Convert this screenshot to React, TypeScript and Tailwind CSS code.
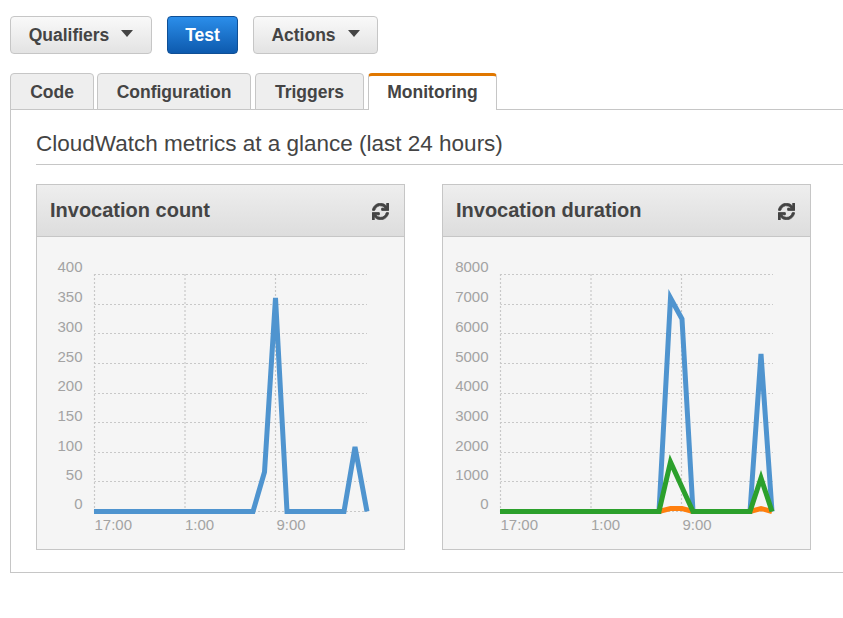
import { FaSync } from 'react-icons/fa'

const font = { fontFamily: '"Liberation Sans", Arial, sans-serif' }

const gridY = [274.5, 304.5, 333.5, 363.5, 393.5, 422.5, 452.5, 481.5, 511.5]
const labelY = [272, 302, 332, 362, 391, 421, 451, 480, 509]

type Series = { color: string; points: string }

type ChartProps = {
  title: string
  originX: number
  yLabels: string[]
  series: Series[]
}

function Chart({ originX, yLabels, series }: ChartProps) {
  const left = originX + 57.5
  const xLines = [left, left + 90.5, left + 181]
  const right = left + 272.5
  return (
    <svg viewBox={`${originX} 237 367 312`} className="block w-[367px] h-[312px]">
      {gridY.map((y) => (
        <line key={y} x1={left} x2={right} y1={y} y2={y} stroke="#c8c8c8" strokeWidth="1.2" strokeDasharray="2 2" strokeDashoffset="0.5" />
      ))}
      {xLines.map((x) => (
        <line key={x} x1={x} x2={x} y1={274} y2={512} stroke="#c8c8c8" strokeWidth="1.2" strokeDasharray="2 2" />
      ))}
      {yLabels.map((label, i) => (
        <text key={label} x={left - 12} y={labelY[i]} textAnchor="end" fontSize="15" fill="#a3a3a3">
          {label}
        </text>
      ))}
      {['17:00', '1:00', '9:00'].map((label, i) => (
        <text key={label} x={xLines[i] + (i === 2 ? 1 : 0)} y={530} fontSize="15" fill="#a3a3a3">
          {label}
        </text>
      ))}
      {series.map((s) => (
        <polyline key={s.color} points={s.points} fill="none" stroke={s.color} strokeWidth="5" />
      ))}
    </svg>
  )
}

function Card(props: ChartProps) {
  return (
    <div className="w-[369px] h-[366px] border border-[#c6c6c6] bg-[#f5f5f5]">
      <div className="h-[52px] border-b border-[#c6c6c6] bg-linear-to-b from-[#eeeeee] to-[#dddddd] flex items-center justify-between pl-[13px] pr-[15px]">
        <span className="text-[20px] font-bold text-[#444] -mt-0.5">{props.title}</span>
        <FaSync className="text-[#444] w-[17px] h-[17px] mt-0.5" stroke="currentColor" strokeWidth={24} />
      </div>
      <Chart {...props} />
    </div>
  )
}

function Caret() {
  return (
    <svg width="12" height="7" viewBox="0 0 12 7" className="ml-3 mb-1">
      <path d="M0 0h12L6 7z" fill="#444" />
    </svg>
  )
}

function Tab({ label, className }: { label: string; className: string }) {
  return (
    <div
      className={`h-[37px] flex items-center justify-center rounded-t-[4px] border border-[#c6c6c6] bg-[#eeeeee] text-[17.5px] font-bold text-[#444] ${className}`}
    >
      {label}
    </div>
  )
}

export default function App() {
  return (
    <div className="w-[843px] h-[618px] overflow-hidden bg-white pt-4" style={font}>
      {/* Toolbar */}
      <div className="flex gap-[15px] pl-[10px]">
        <button className="w-[142px] h-[38px] flex items-center justify-center rounded-[4px] border border-[#c6c6c6] bg-linear-to-b from-[#f9f9f9] to-[#e3e3e3] text-[17.5px] font-bold text-[#444]">
          Qualifiers
          <Caret />
        </button>
        <button className="w-[71px] h-[38px] flex items-center justify-center rounded-[4px] border border-[#0f4f95] bg-linear-to-b from-[#2b8eea] to-[#0d5aae] text-[17.5px] font-bold text-white">
          Test
        </button>
        <button className="w-[125px] h-[38px] flex items-center justify-center rounded-[4px] border border-[#c6c6c6] bg-linear-to-b from-[#f9f9f9] to-[#e3e3e3] text-[17.5px] font-bold text-[#444]">
          Actions
          <Caret />
        </button>
      </div>

      {/* Tabs */}
      <div className="flex items-end pl-[10px] mt-[19px] relative z-10 -mb-px">
        <Tab label="Code" className="w-[84px] pt-px" />
        <Tab label="Configuration" className="w-[154px] ml-[3px] pt-px" />
        <Tab label="Triggers" className="w-[109px] ml-1 pt-px" />
        <div className="w-[129px] h-[37px] ml-1 flex items-center justify-center rounded-t-[4px] border border-b-0 border-[#c6c6c6] border-t-[3px] border-t-[#e07700] bg-white text-[17.5px] font-bold text-[#444] pb-px">
          Monitoring
        </div>
      </div>

      {/* Panel */}
      <div className="ml-[10px] h-[464px] border border-r-0 border-[#c6c6c6] pl-[25px]">
        <h2 className="h-[55px] flex items-end pb-[3px] border-b border-[#c6c6c6] text-[22.5px] text-[#444]">
          CloudWatch metrics at a glance (last 24 hours)
        </h2>
        <div className="flex gap-[37px] mt-[19px]">
          <Card
            title="Invocation count"
            originX={37}
            yLabels={['400', '350', '300', '250', '200', '150', '100', '50', '0']}
            series={[
              {
                color: '#4f94cf',
                points: '94,511.5 253,511.5 264.5,472 275.5,298 287,511.5 344,511.5 355,447 367,511.5',
              },
            ]}
          />
          <Card
            title="Invocation duration"
            originX={443}
            yLabels={['8000', '7000', '6000', '5000', '4000', '3000', '2000', '1000', '0']}
            series={[
              {
                color: '#4f94cf',
                points: '500,511.5 659,511.5 670.5,298 682,319 693,511.5 750,511.5 761,354 772,511.5',
              },
              {
                color: '#ff7f0e',
                points: '500,511.5 659,511.5 670.5,508.5 682,508.5 693,511.5 750,511.5 761,508.5 772,511.5',
              },
              {
                color: '#2ca02c',
                points: '500,511.5 659,511.5 670.5,462 693,511.5 750,511.5 761,478 772,511.5',
              },
            ]}
          />
        </div>
      </div>
    </div>
  )
}
